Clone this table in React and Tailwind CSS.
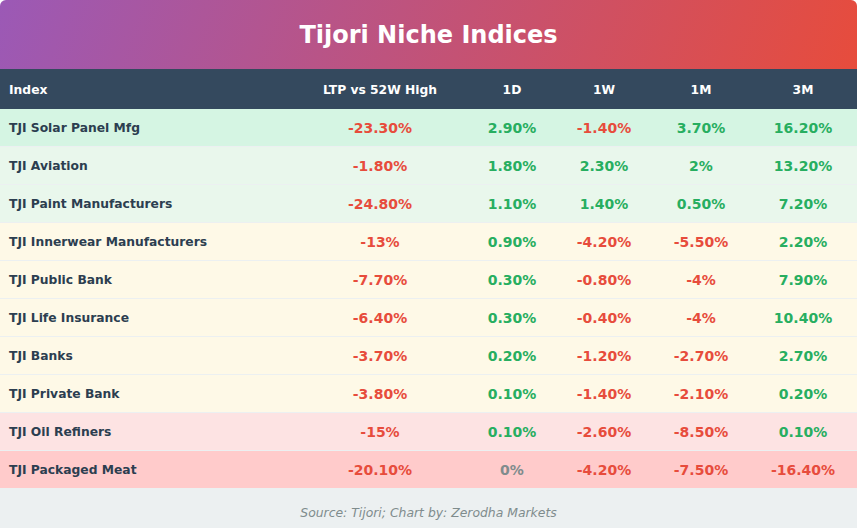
import React from "react";

const rows = [
  { name: "TJI Solar Panel Mfg", bg: "bg-[#d5f5e3]", v: ["-23.30%", "2.90%", "-1.40%", "3.70%", "16.20%"] },
  { name: "TJI Aviation", bg: "bg-[#e9f7ec]", v: ["-1.80%", "1.80%", "2.30%", "2%", "13.20%"] },
  { name: "TJI Paint Manufacturers", bg: "bg-[#e9f7ec]", v: ["-24.80%", "1.10%", "1.40%", "0.50%", "7.20%"] },
  { name: "TJI Innerwear Manufacturers", bg: "bg-[#fef9e7]", v: ["-13%", "0.90%", "-4.20%", "-5.50%", "2.20%"] },
  { name: "TJI Public Bank", bg: "bg-[#fef9e7]", v: ["-7.70%", "0.30%", "-0.80%", "-4%", "7.90%"] },
  { name: "TJI Life Insurance", bg: "bg-[#fef9e7]", v: ["-6.40%", "0.30%", "-0.40%", "-4%", "10.40%"] },
  { name: "TJI Banks", bg: "bg-[#fef9e7]", v: ["-3.70%", "0.20%", "-1.20%", "-2.70%", "2.70%"] },
  { name: "TJI Private Bank", bg: "bg-[#fef9e7]", v: ["-3.80%", "0.10%", "-1.40%", "-2.10%", "0.20%"] },
  { name: "TJI Oil Refiners", bg: "bg-[#fde3e3]", v: ["-15%", "0.10%", "-2.60%", "-8.50%", "0.10%"] },
  { name: "TJI Packaged Meat", bg: "bg-[#ffcbcb]", v: ["-20.10%", "0%", "-4.20%", "-7.50%", "-16.40%"] },
];

const cols = "grid grid-cols-[291px_178px_86px_98px_96px_108px]";

function color(v) {
  if (v.startsWith("-")) return "text-[#e74c3c]";
  if (v === "0%") return "text-[#7f8c8d]";
  return "text-[#27ae60]";
}

export default function App() {
  return (
    <div className="w-[857px] h-[528px] bg-white font-['DejaVu_Sans',Verdana,sans-serif]">
      <div className="w-[857px] h-[528px] rounded-t-[6px] overflow-hidden bg-[#ecf0f1] flex flex-col">
        <div className="h-[69px] flex items-center justify-center bg-[linear-gradient(110deg,#9b59b6,#e74c3c)]">
          <h1 className="text-white font-bold text-[24px] leading-none mt-[1px]">Tijori Niche Indices</h1>
        </div>
        <div className={`${cols} h-[40px] bg-[#34495e] text-white font-bold text-[12.3px] items-center pt-[2px]`}>
          <div className="pl-[9px]">Index</div>
          <div className="text-center">LTP vs 52W High</div>
          <div className="text-center">1D</div>
          <div className="text-center">1W</div>
          <div className="text-center">1M</div>
          <div className="text-center">3M</div>
        </div>
        {rows.map((r) => (
          <div key={r.name} className={`${cols} h-[38px] ${r.bg} border-b border-[#ecf0f1] items-center font-bold pt-[2px]`}>
            <div className="pl-[9px] text-[#2c3e50] text-[12.3px]">{r.name}</div>
            {r.v.map((v, i) => (
              <div key={i} className={`text-center text-[14px] ${color(v)}`}>{v}</div>
            ))}
          </div>
        ))}
        <div className="flex-1 flex items-center justify-center pt-[10px]">
          <span className="italic text-[12.4px] text-[#7f8c8d]">Source: Tijori; Chart by: Zerodha Markets</span>
        </div>
      </div>
    </div>
  );
}
